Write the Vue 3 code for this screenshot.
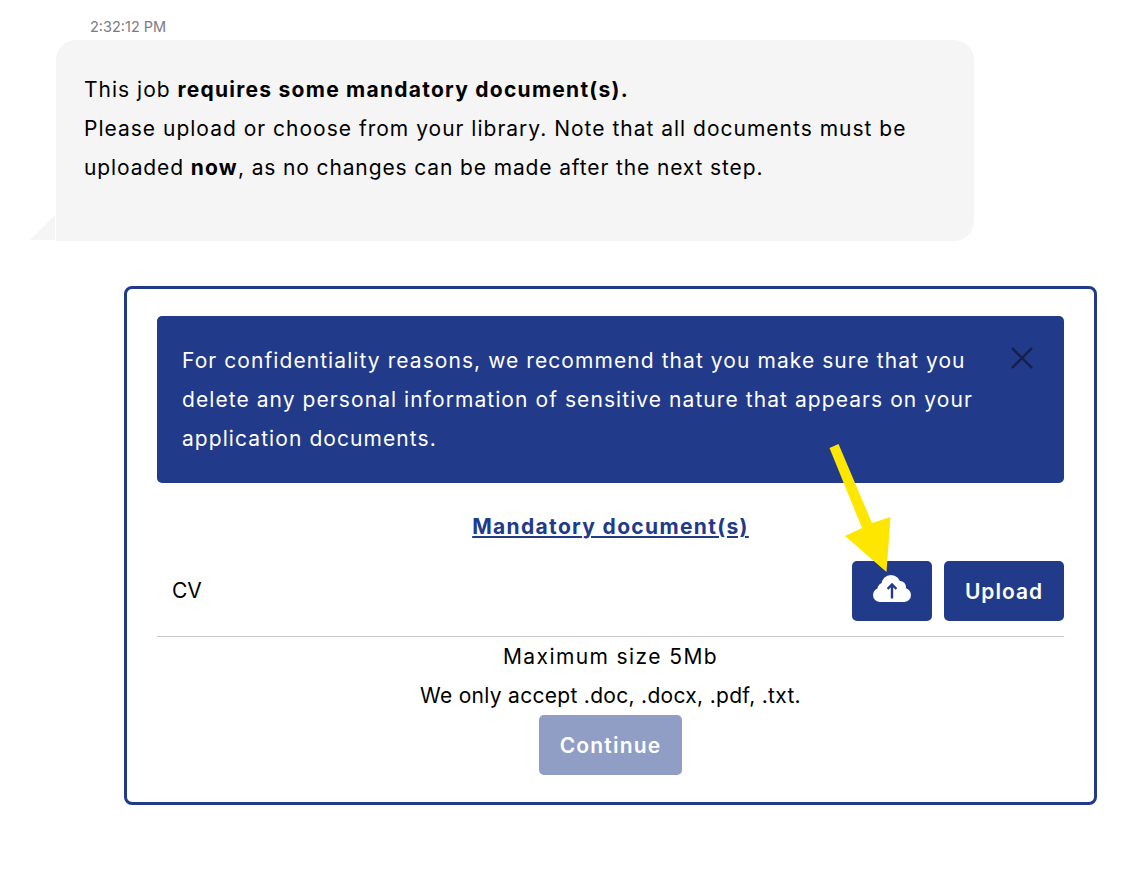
<script setup>
const fileTypes = ".doc, .docx, .pdf, .txt";
</script>

<template>
  <div class="page">
    <div class="time">2:32:12 PM</div>
    <div class="bubble">
      <span class="tail"></span>
      <p>This job <b>requires some mandatory document(s).</b></p>
      <p>Please upload or choose from your library. Note that all documents must be</p>
      <p class="tight">uploaded <b>now</b>, as no changes can be made after the next step.</p>
    </div>

    <div class="card">
      <div class="alert">
        <p>For confidentiality reasons, we recommend that you make sure that you delete any personal information of sensitive nature that appears on your application documents.</p>
        <svg class="close" viewBox="0 0 24 24" width="24" height="24">
          <path d="M2 2 L22 22 M22 2 L2 22" stroke="#14204a" stroke-width="2.4" fill="none" />
        </svg>
      </div>

      <h3 class="title">Mandatory document(s)</h3>

      <div class="doc-row">
        <span class="doc-name">CV</span>
        <button class="btn icon-btn">
          <svg class="cloud" viewBox="0 0 38 27" width="38" height="27">
            <g fill="#fff">
              <circle cx="7" cy="20" r="7" />
              <circle cx="11" cy="14" r="6.500" />
              <circle cx="18" cy="9.500" r="9.500" />
              <circle cx="27" cy="12" r="6" />
              <circle cx="31" cy="20" r="7" />
              <rect x="7" y="12" width="24" height="15" />
            </g>
            <path d="M19 23.500V9.500M14.600 14 19 9.500 23.400 14" stroke="#213a8a" stroke-width="2.400" fill="none" />
          </svg>
        </button>
        <button class="btn upload">Upload</button>
      </div>

      <div class="info">
        <p class="size">Maximum size 5Mb</p>
        <p class="types">We only accept {{ fileTypes }}.</p>
        <button class="btn continue">Continue</button>
      </div>
    </div>

    <svg class="arrow" viewBox="0 0 1133 884" width="1133" height="884">
      <polygon fill="#ffe600" points="829.500,448 838.500,444 872,523 890.500,517 886.500,572 845,536 862,528" />
    </svg>
  </div>
</template>

<style scoped>
.page {
  position: relative;
  width: 1133px;
  height: 884px;
  overflow: hidden;
  box-sizing: border-box;
  padding-top: 18px;
  font-family: "Inter", "Liberation Sans", sans-serif;
  color: #000;
}
p {
  margin: 0;
}
b {
  font-weight: 700;
  letter-spacing: 1.25px;
}
.time {
  margin-left: 90px;
  height: 22px;
  font-size: 14.500px;
  line-height: 18px;
  color: #7d7a88;
}
.bubble {
  position: relative;
  box-sizing: border-box;
  width: 918px;
  height: 201px;
  margin-left: 56px;
  padding: 30px 28px;
  background: #f5f5f5;
  border-radius: 20px 20px 20px 0;
  font-size: 21px;
  line-height: 39px;
  letter-spacing: 1px;
}
.tight {
  letter-spacing: 0.87px;
}
.tail {
  position: absolute;
  left: -26px;
  bottom: 1px;
  width: 25px;
  height: 25px;
  background: #f5f5f5;
  clip-path: polygon(100% 0, 100% 100%, 0 100%);
}
.card {
  box-sizing: border-box;
  width: 973px;
  height: 519px;
  margin: 45px 0 0 124px;
  padding: 27px 30px 0;
  border: 3px solid #213a8a;
  border-radius: 8px;
  font-size: 21px;
  line-height: 39px;
  letter-spacing: 1.07px;
}
.alert {
  display: flex;
  justify-content: space-between;
  box-sizing: border-box;
  height: 167px;
  padding: 25px 30px 0 25px;
  background: #213a8a;
  border-radius: 5px;
  color: #fff;
}
.alert p {
  width: 800px;
}
.close {
  margin-top: 5px;
}
.title {
  margin: 24px 0 15px;
  font-size: 21px;
  line-height: 39px;
  font-weight: 700;
  letter-spacing: 1.33px;
  color: #213a8a;
  text-align: center;
  text-decoration: underline;
}
.doc-row {
  display: flex;
  align-items: center;
  gap: 12px;
  height: 76px;
  padding-bottom: 15px;
  box-sizing: border-box;
  border-bottom: 1px solid #c8c6d4;
}
.doc-name {
  flex: 1;
  margin-top: -2px;
  padding-left: 15px;
  letter-spacing: 0;
}
.btn {
  height: 60px;
  padding: 0;
  border: none;
  border-radius: 5px;
  background: #213a8a;
  color: #fff;
  font: inherit;
  font-weight: 600;
  letter-spacing: 1px;
}
.upload {
  width: 120px;
}
.icon-btn {
  display: flex;
  align-items: center;
  justify-content: center;
  width: 80px;
}
.cloud {
  margin-top: -6px;
}
.info {
  display: flex;
  flex-direction: column;
  align-items: center;
}
.size {
  letter-spacing: 1.4px;
}
.types {
  letter-spacing: 0.3px;
}
.continue {
  background: #909dc4;
  width: 143px;
  letter-spacing: 1.2px;
}
.arrow {
  position: absolute;
  left: 0;
  top: 0;
  pointer-events: none;
}
</style>
